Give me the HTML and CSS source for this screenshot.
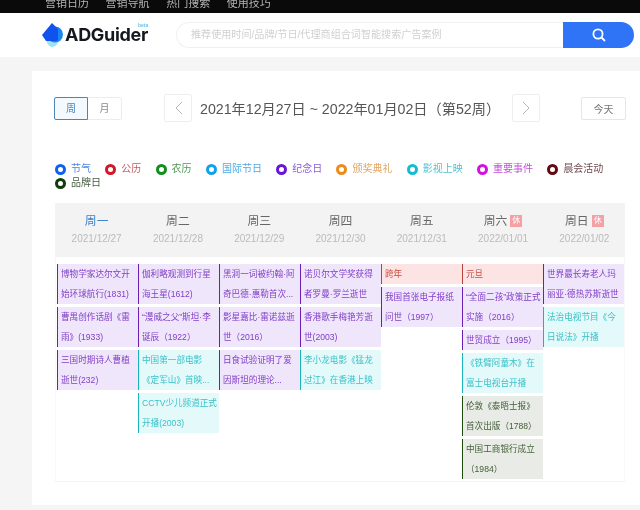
FILE: index.html
```html
<!DOCTYPE html>
<html lang="zh">
<head>
<meta charset="utf-8">
<title>ADGuider 营销日历</title>
<link rel="stylesheet" href="styles.css">
</head>
<body>
<nav class="topbar">
  <span>营销日历</span><span>营销导航</span><span>热门搜索</span><span>使用技巧</span>
</nav>
<header class="header">
  <div class="logo">
    <svg class="logo-icon" width="22" height="25" viewBox="0 0 22 25">
      <path d="M4 14h13c0 6-3 10-7 10-3 0-6-4-6-10z" fill="#9fe3ef"/>
      <circle cx="13" cy="11.500" r="8" fill="#1a86f0"/>
      <path d="M10 0L0 12l4 6h9a7 7 0 0 0 3-1V6z" fill="#0f52ee"/>
    </svg>
    <span class="logo-text">ADGuider</span>
    <span class="logo-beta">beta</span>
  </div>
  <div class="search">
    <div class="search-input">推荐使用时间/品牌/节日/代理商组合词智能搜索广告案例</div>
    <div class="search-btn">
      <svg width="14" height="14" viewBox="0 0 14 14" fill="none" stroke="#fff" stroke-width="1.8"><circle cx="6" cy="6" r="4.6"/><path d="M9.500 9.500l3.500 3.500"/></svg>
    </div>
  </div>
</header>
<main class="main">
  <section class="card">
    <div class="toolbar">
      <div class="toggle"><span class="toggle-item active">周</span><span class="toggle-item">月</span></div>
      <div class="range">
        <button class="nav-btn"><svg width="9" height="14" viewBox="0 0 9 14" fill="none" stroke="#b5b5b5" stroke-width="1"><path d="M8 1L2 7l6 6"/></svg></button>
        <span class="range-text">2021年12月27日 ~ 2022年01月02日（第52周）</span>
        <button class="nav-btn"><svg width="9" height="14" viewBox="0 0 9 14" fill="none" stroke="#b5b5b5" stroke-width="1"><path d="M1 1l6 6-6 6"/></svg></button>
      </div>
      <button class="today">今天</button>
    </div>
    <ul class="legend">
      <li class="c-jq"><i></i>节气</li>
      <li class="c-gl"><i></i>公历</li>
      <li class="c-nl"><i></i>农历</li>
      <li class="c-gj"><i></i>国际节日</li>
      <li class="c-jn"><i></i>纪念日</li>
      <li class="c-bj"><i></i>颁奖典礼</li>
      <li class="c-ys"><i></i>影视上映</li>
      <li class="c-zy"><i></i>重要事件</li>
      <li class="c-ch"><i></i>晨会活动</li>
      <li class="c-pp"><i></i>品牌日</li>
    </ul>
    <div class="calendar">
      <div class="week-head">
        <div class="day-head today-head"><b>周一</b><small>2021/12/27</small></div>
        <div class="day-head"><b>周二</b><small>2021/12/28</small></div>
        <div class="day-head"><b>周三</b><small>2021/12/29</small></div>
        <div class="day-head"><b>周四</b><small>2021/12/30</small></div>
        <div class="day-head"><b>周五</b><small>2021/12/31</small></div>
        <div class="day-head"><b>周六<em>休</em></b><small>2022/01/01</small></div>
        <div class="day-head"><b>周日<em>休</em></b><small>2022/01/02</small></div>
      </div>
      <div class="week-body">
        <div class="col">
          <div class="ev purple">博物学家达尔文开始环球航行(1831)</div>
          <div class="ev purple">曹禺创作话剧《雷雨》(1933)</div>
          <div class="ev purple">三国时期诗人曹植逝世(232)</div>
        </div>
        <div class="col">
          <div class="ev purple">伽利略观测到行星海王星(1612)</div>
          <div class="ev purple">“漫威之父”斯坦·李诞辰（1922）</div>
          <div class="ev teal">中国第一部电影《定军山》首映...</div>
          <div class="ev teal">CCTV少儿频道正式开播(2003)</div>
        </div>
        <div class="col">
          <div class="ev purple">黑洞一词被约翰·阿奇巴德·惠勒首次...</div>
          <div class="ev purple">影星嘉比·雷诺兹逝世（2016）</div>
          <div class="ev purple">日食试验证明了爱因斯坦的理论...</div>
        </div>
        <div class="col">
          <div class="ev purple">诺贝尔文学奖获得者罗曼·罗兰逝世</div>
          <div class="ev purple">香港歌手梅艳芳逝世(2003)</div>
          <div class="ev teal">李小龙电影《猛龙过江》在香港上映</div>
        </div>
        <div class="col">
          <div class="ev red">跨年</div>
          <div class="ev purple">我国首张电子报纸问世（1997）</div>
        </div>
        <div class="col">
          <div class="ev red">元旦</div>
          <div class="ev purple">“全面二孩”政策正式实施（2016）</div>
          <div class="ev purple">世贸成立（1995）</div>
          <div class="ev teal">《铁臂阿童木》在富士电视台开播</div>
          <div class="ev green">伦敦《泰晤士报》首次出版（1788）</div>
          <div class="ev green">中国工商银行成立（1984）</div>
        </div>
        <div class="col">
          <div class="ev purple">世界最长寿老人玛丽亚·德热苏斯逝世</div>
          <div class="ev teal">法治电视节目《今日说法》开播</div>
        </div>
      </div>
    </div>
  </section>
</main>
</body>
</html>
```
FILE: styles.css
```css
* { box-sizing: border-box; }
html, body { margin: 0; height: 510px; overflow: hidden; }
body {
  background: #f5f5f5;
  font-family: "Liberation Sans", "Noto Sans CJK SC", sans-serif;
  color: #555;
  filter: blur(0.3px);
}
.topbar {
  height: 13px;
  background: #0a0a0a;
  color: #b4b4b4;
  font-size: 11px;
  line-height: 12px;
  padding-left: 45px;
  display: flex;
  gap: 16px;
  align-items: flex-end;
  overflow: hidden;
}
.topbar span { flex: none; width: 44.6px; padding-bottom: 4px; }
.header {
  height: 44px;
  background: #fff;
  display: flex;
  align-items: center;
  padding: 0 6px 0 42px;
}
.logo { position: relative; display: flex; align-items: center; width: 134px; flex: none; }
.logo-icon { flex: none; margin-right: 1px; }
.logo-text {
  font-family: Inter, "Liberation Sans", sans-serif;
  font-weight: 700;
  font-size: 18px;
  line-height: 14px;
  letter-spacing: -0.3px;
  color: #15181f;
}
.logo-beta {
  position: absolute;
  left: 96px;
  top: 0;
  font-size: 5px;
  line-height: 5px;
  font-weight: 700;
  color: #6cc3e6;
}
.search { flex: 1; display: flex; height: 26px; }
.search-input {
  flex: 1;
  border: 1px solid #f0f0f0;
  border-right: 0;
  border-radius: 13px 0 0 13px;
  font-size: 10.1px;
  line-height: 24px;
  color: #d0d0d0;
  padding-left: 14px;
}
.search-btn {
  width: 71px;
  background: #2f73f6;
  border-radius: 0 13px 13px 0;
  display: flex;
  align-items: center;
  justify-content: center;
}
.main { padding: 14px 0 0 32px; }
.card { background: #fff; height: 434px; padding: 23px 14px 0 22px; }
.toolbar { display: flex; align-items: center; height: 28px; }
.toggle { display: flex; }
.toggle-item {
  width: 34px;
  height: 23px;
  border: 1px solid #ececec;
  font-size: 10px;
  line-height: 21px;
  text-align: center;
  color: #888;
}
.toggle-item:last-child { border-radius: 0 2px 2px 0; border-left: 0; }
.toggle-item.active {
  border-color: #4a86b8;
  background: #f3f9fd;
  color: #3d86c6;
  border-radius: 2px 0 0 2px;
}
.range { display: flex; align-items: center; margin-left: 42px; }
.range-text { font-size: 14.2px; width: 320px; padding-left: 8px; white-space: nowrap; color: #555; }
.nav-btn {
  width: 28px;
  height: 28px;
  padding: 0;
  background: #fff;
  border: 1px solid #eee;
  border-radius: 2px;
  display: flex;
  align-items: center;
  justify-content: center;
}
.today {
  margin-left: auto;
  width: 45px;
  height: 23px;
  padding: 0;
  background: #fff;
  border: 1px solid #e6e6e6;
  border-radius: 2px;
  font: 10px "Liberation Sans", "Noto Sans CJK SC", sans-serif;
  color: #777;
}
.legend {
  list-style: none;
  margin: 40px 0 0;
  padding: 0 0 0 1px;
  display: flex;
  flex-wrap: wrap;
  column-gap: 14.3px;
  font-size: 10px;
  line-height: 14px;
  height: 28px;
}
.legend li { display: flex; align-items: center; color: var(--text); }
.legend i {
  width: 11px;
  height: 11px;
  border-radius: 50%;
  background: #fff;
  border: 3.5px solid var(--dot);
  margin-right: 5px;
}
.c-jq { --dot: #1060f0; --text: #4a86e0; }
.c-gl { --dot: #d01828; --text: #c45a5e; }
.c-nl { --dot: #109018; --text: #4d9a55; }
.c-gj { --dot: #10a0f0; --text: #4cabe4; }
.c-jn { --dot: #6a14d8; --text: #8a5fd2; }
.c-bj { --dot: #f08a14; --text: #e2a45c; }
.c-ys { --dot: #14bcd0; --text: #52c2d2; }
.c-zy { --dot: #d014e0; --text: #c24fd6; }
.c-ch { --dot: #600a14; --text: #6e4a4e; }
.c-pp { --dot: #103d08; --text: #4a5e45; }
.calendar { margin: 13px 0 0 1px; width: 570px; }
.week-head {
  display: grid;
  grid-template-columns: repeat(7, 1fr);
  height: 54px;
  background: #f3f3f3;
  padding-left: 1px;
}
.day-head { display: flex; flex-direction: column; align-items: center; padding-top: 11px; }
.day-head b {
  font-weight: 400;
  font-size: 11.8px;
  line-height: 14px;
  color: #666;
  display: flex;
  align-items: center;
}
.day-head small { font-size: 10px; line-height: 14px; margin-top: 4px; color: #bbb; }
.day-head em {
  font-style: normal;
  width: 12px;
  height: 12px;
  background: #f4a0a4;
  color: #fff;
  font-size: 8px;
  line-height: 12px;
  text-align: center;
  margin-left: 3px;
}
.today-head b { color: #3d80c8; }
.week-body {
  display: grid;
  grid-template-columns: repeat(7, 1fr);
  height: 225px;
  padding: 7px 0 3px 1px;
  border-left: 1px solid #f8f8f8;
  border-right: 1px solid #f8f8f8;
  border-bottom: 1px solid #f5f5f5;
}
.col { display: flex; flex-direction: column; gap: 3px; min-width: 0; }
.ev {
  border-left: 1.5px solid;
  font-size: 8.6px;
  line-height: 20px;
  padding-left: 3px;
  flex: none;
}
.purple { background: #efe6fb; border-color: #6a1fb5; color: #8240c8; }
.teal { background: #e4f9fa; border-color: #19b5b8; color: #38c2c8; }
.red { background: #fde4e4; border-color: #b5443a; color: #c8493c; }
.green { background: #e8ebe6; border-color: #1f4d10; color: #45603a; }
```
